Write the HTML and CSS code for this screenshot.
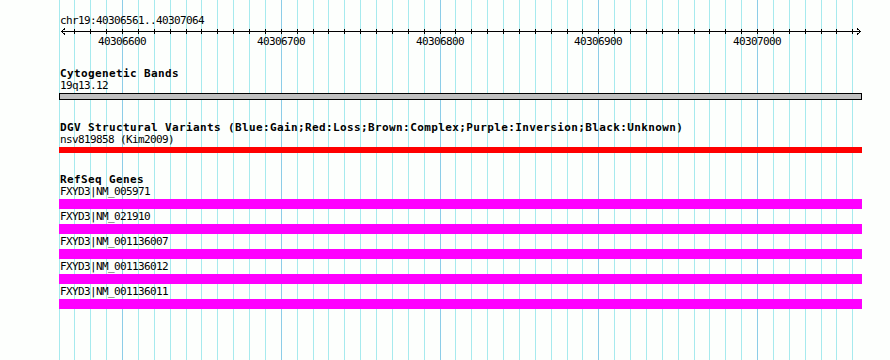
FILE: index.html
```
<!DOCTYPE html>
<html>
<head>
<meta charset="utf-8">
<link rel="stylesheet" href="styles.css">
</head>
<body>
<div class="panel">
  <svg class="grid" width="890" height="360" viewBox="0 0 890 360">
    <path class="grid-minor" d="M59.5 0V360M74.5 0V360M90.5 0V360M106.5 0V360M138.5 0V360M154.5 0V360M170.5 0V360M186.5 0V360M201.5 0V360M217.5 0V360M233.5 0V360M249.5 0V360M265.5 0V360M297.5 0V360M313.5 0V360M328.5 0V360M344.5 0V360M360.5 0V360M376.5 0V360M392.5 0V360M408.5 0V360M424.5 0V360M455.5 0V360M471.5 0V360M487.5 0V360M503.5 0V360M519.5 0V360M535.5 0V360M551.5 0V360M567.5 0V360M582.5 0V360M614.5 0V360M630.5 0V360M646.5 0V360M662.5 0V360M678.5 0V360M694.5 0V360M709.5 0V360M725.5 0V360M741.5 0V360M773.5 0V360M789.5 0V360M805.5 0V360M821.5 0V360M836.5 0V360M852.5 0V360"/>
    <path class="grid-major" d="M122.5 0V360M281.5 0V360M440.5 0V360M598.5 0V360M757.5 0V360"/>
  </svg>
  <div class="tracks">
    <div class="ruler-title">chr19:40306561..40307064</div>
    <svg class="scale" width="890" height="21" viewBox="0 0 890 21">
      <path class="axis" d="M61 4.5H861M65 1.5L61.5 4.5L65 7.5M857 1.5L860.5 4.5L857 7.5"/>
      <path class="axis" d="M74.5 2V7M90.5 2V7M106.5 2V7M122.5 2V7M138.5 2V7M154.5 2V7M170.5 2V7M186.5 2V7M201.5 2V7M217.5 2V7M233.5 2V7M249.5 2V7M265.5 2V7M281.5 2V7M297.5 2V7M313.5 2V7M328.5 2V7M344.5 2V7M360.5 2V7M376.5 2V7M392.5 2V7M408.5 2V7M424.5 2V7M440.5 2V7M455.5 2V7M471.5 2V7M487.5 2V7M503.5 2V7M519.5 2V7M535.5 2V7M551.5 2V7M567.5 2V7M582.5 2V7M598.5 2V7M614.5 2V7M630.5 2V7M646.5 2V7M662.5 2V7M678.5 2V7M694.5 2V7M709.5 2V7M725.5 2V7M741.5 2V7M757.5 2V7M773.5 2V7M789.5 2V7M805.5 2V7M821.5 2V7M836.5 2V7M852.5 2V7"/>
      <text class="scale-label" x="98" y="18">40306600</text>
      <text class="scale-label" x="257" y="18">40306700</text>
      <text class="scale-label" x="416" y="18">40306800</text>
      <text class="scale-label" x="574" y="18">40306900</text>
      <text class="scale-label" x="733" y="18">40307000</text>
    </svg>

    <section class="track track-cyto">
      <div class="track-title">Cytogenetic Bands</div>
      <div class="feature">
        <div class="feature-label">19q13.12</div>
        <div class="bar bar-band"></div>
      </div>
    </section>

    <section class="track track-dgv">
      <div class="track-title">DGV Structural Variants (Blue:Gain;Red:Loss;Brown:Complex;Purple:Inversion;Black:Unknown)</div>
      <div class="feature">
        <div class="feature-label">nsv819858 (Kim2009)</div>
        <div class="bar bar-loss"></div>
      </div>
    </section>

    <section class="track track-refseq">
      <div class="track-title">RefSeq Genes</div>
      <div class="feature gene">
        <div class="feature-label">FXYD3|NM_005971</div>
        <div class="bar bar-gene"></div>
      </div>
      <div class="feature gene">
        <div class="feature-label">FXYD3|NM_021910</div>
        <div class="bar bar-gene"></div>
      </div>
      <div class="feature gene">
        <div class="feature-label">FXYD3|NM_001136007</div>
        <div class="bar bar-gene"></div>
      </div>
      <div class="feature gene">
        <div class="feature-label">FXYD3|NM_001136012</div>
        <div class="bar bar-gene"></div>
      </div>
      <div class="feature gene">
        <div class="feature-label">FXYD3|NM_001136011</div>
        <div class="bar bar-gene"></div>
      </div>
    </section>
  </div>
</div>
</body>
</html>
```

FILE: styles.css
```
html, body {
  margin: 0;
  padding: 0;
  background: #fdfffd;
}

.panel {
  position: relative;
  width: 890px;
  height: 360px;
  overflow: hidden;
  background: #fdfffd;
  font-family: "DejaVu Sans Mono", "Liberation Mono", monospace;
  font-size: 11px;
  line-height: 12px;
  color: #000;
}

.grid {
  position: absolute;
  left: 0;
  top: 0;
  display: block;
}

.grid-minor {
  stroke: #a6eaee;
  stroke-width: 1;
  fill: none;
  shape-rendering: crispEdges;
}

.grid-major {
  stroke: #8ccde8;
  stroke-width: 1;
  fill: none;
  shape-rendering: crispEdges;
}

.tracks {
  position: relative;
  padding-top: 15px;
}

.ruler-title {
  padding-left: 60px;
  letter-spacing: -0.62px;
  white-space: nowrap;
}

.scale {
  display: block;
}

.axis {
  stroke: #000;
  stroke-width: 1;
  fill: none;
  shape-rendering: crispEdges;
}

.scale-label {
  font-family: "DejaVu Sans Mono", "Liberation Mono", monospace;
  font-size: 11px;
  letter-spacing: -0.62px;
  fill: #000;
}

.track {
  display: flex;
  flex-direction: column;
}

.track-cyto {
  margin-top: 20px;
}

.track-dgv {
  margin-top: 22px;
}

.track-refseq {
  margin-top: 21px;
}

.track-title {
  padding-left: 60px;
  font-weight: bold;
  letter-spacing: 0.38px;
  white-space: nowrap;
}

.feature {
  display: flex;
  flex-direction: column;
}

.feature-label {
  padding-left: 60px;
  letter-spacing: -0.62px;
  white-space: nowrap;
}

.bar {
  margin-left: 59px;
  width: 803px;
  margin-top: 1px;
  box-sizing: border-box;
}

.bar-band {
  height: 7px;
  background: #c0c0c0;
  border: 1px solid #000;
}

.bar-loss {
  height: 6px;
  background: #ff0000;
}

.bar-gene {
  height: 10px;
  background: #ff00ff;
}

.gene + .gene {
  margin-top: 2px;
}
```
